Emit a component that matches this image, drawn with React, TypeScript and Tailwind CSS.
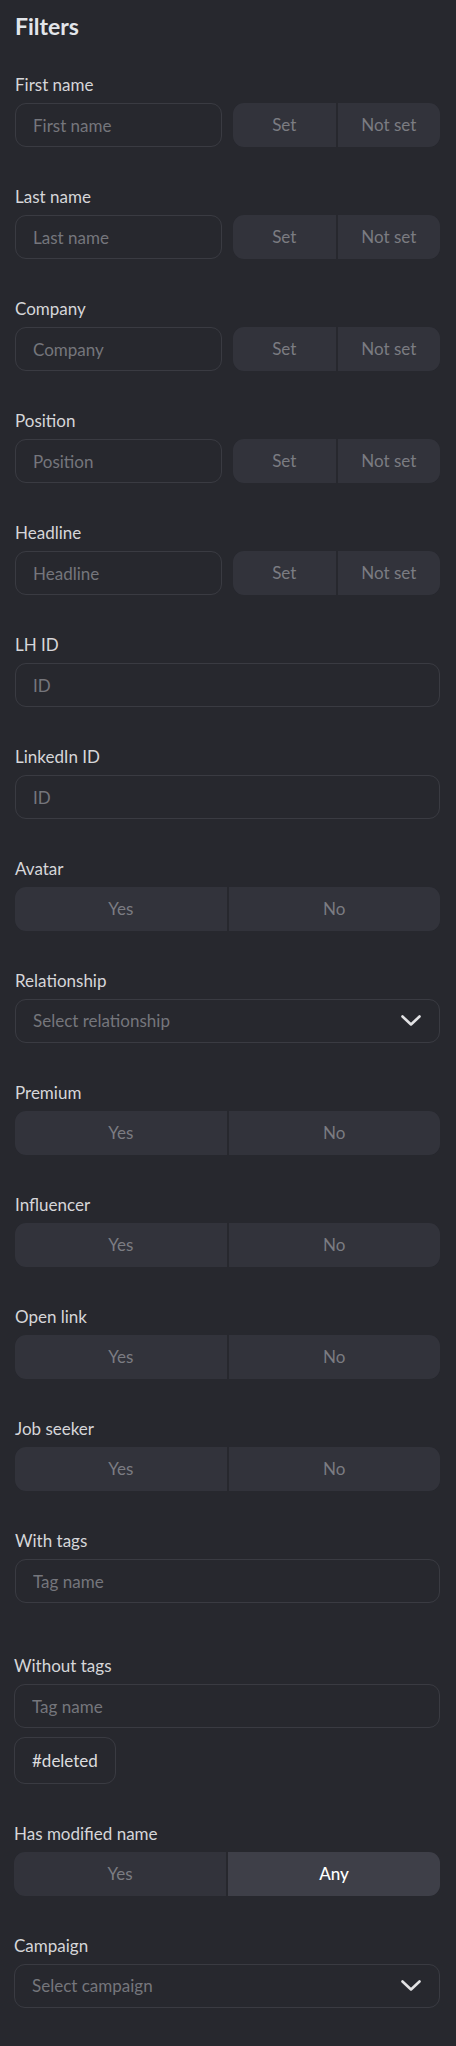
const textFilters = ['First name', 'Last name', 'Company', 'Position', 'Headline'];
const idFilters = ['LH ID', 'LinkedIn ID'];
const yesNoFilters = ['Premium', 'Influencer', 'Open link', 'Job seeker'];

function Label({ children }: { children: React.ReactNode }) {
  return <div className="mb-[6px] text-[17px] leading-6 text-[#d6d6d9]">{children}</div>;
}

function TextInput({ placeholder }: { placeholder: string }) {
  return (
    <input
      placeholder={placeholder}
      className="h-11 min-w-0 rounded-[11px] border border-[#3a3b42] bg-transparent px-[17px] text-[17px] text-[#d6d6d9] outline-none placeholder:text-[#75767c]"
    />
  );
}

function Segmented({ options, active }: { options: string[]; active?: string }) {
  return (
    <div className="flex h-11 gap-[2px] overflow-hidden rounded-[11px] bg-[#27282e]">
      {options.map((opt) => (
        <button
          key={opt}
          className={
            opt === active
              ? 'flex-1 bg-[#3e3f48] text-[17px] font-medium text-white'
              : 'flex-1 bg-[#32333b] text-[17px] text-[#7b7c82]'
          }
        >
          {opt}
        </button>
      ))}
    </div>
  );
}

function Chevron() {
  return (
    <svg width="20" height="12" viewBox="0 0 20 12" fill="none" className="text-[#e2e2e4]">
      <path d="M1.5 1.5 L10 9.5 L18.5 1.5" stroke="currentColor" strokeWidth="2.6" strokeLinecap="round" strokeLinejoin="round" />
    </svg>
  );
}

function Select({ placeholder }: { placeholder: string }) {
  return (
    <div className="flex h-11 items-center justify-between rounded-[11px] border border-[#3a3b42] pr-[18px] pl-[17px]">
      <span className="text-[17px] text-[#75767c]">{placeholder}</span>
      <Chevron />
    </div>
  );
}

export default function App() {
  return (
    <div
      className="min-h-[2046px] bg-[#27282e] pt-[10px] pr-[16px] pb-8 pl-[15px]"
      style={{ fontFamily: 'Lato, "Noto Sans", sans-serif' }}
    >
      <h1 className="mb-[31px] text-[23px] leading-8 font-bold text-[#e2e5ea]">Filters</h1>

      <div className="flex flex-col gap-[38px]">
        {textFilters.map((name) => (
          <div key={name}>
            <Label>{name}</Label>
            <div className="grid grid-cols-2 gap-[11px]">
              <TextInput placeholder={name} />
              <Segmented options={['Set', 'Not set']} />
            </div>
          </div>
        ))}

        {idFilters.map((name) => (
          <div key={name} className="flex flex-col">
            <Label>{name}</Label>
            <TextInput placeholder="ID" />
          </div>
        ))}

        <div>
          <Label>Avatar</Label>
          <Segmented options={['Yes', 'No']} />
        </div>

        <div>
          <Label>Relationship</Label>
          <Select placeholder="Select relationship" />
        </div>

        {yesNoFilters.map((name) => (
          <div key={name}>
            <Label>{name}</Label>
            <Segmented options={['Yes', 'No']} />
          </div>
        ))}

        <div className="flex flex-col pb-[13px]">
          <Label>With tags</Label>
          <TextInput placeholder="Tag name" />
        </div>

        <div className="-ml-px flex flex-col">
          <Label>Without tags</Label>
          <TextInput placeholder="Tag name" />
          <div className="mt-[9px] flex">
            <span className="flex h-[47px] items-center rounded-[11px] border border-[#3a3b42] px-[17px] text-[17px] text-[#dcdcdf]">
              #deleted
            </span>
          </div>
        </div>

        <div className="-ml-px">
          <Label>Has modified name</Label>
          <Segmented options={['Yes', 'Any']} active="Any" />
        </div>

        <div className="-ml-px">
          <Label>Campaign</Label>
          <Select placeholder="Select campaign" />
        </div>
      </div>
    </div>
  );
}
